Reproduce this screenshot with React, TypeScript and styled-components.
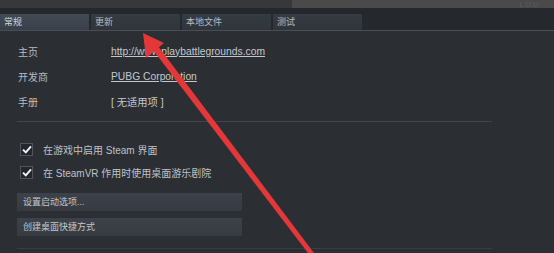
import styled, { createGlobalStyle } from 'styled-components'

const GlobalStyle = createGlobalStyle`
  html, body {
    margin: 0;
    padding: 0;
    background: #2b2e33;
    overflow: hidden;
  }
  * { box-sizing: border-box; }
`

const tabs = ['常规', '更新', '本地文件', '测试']

const info = [
  { label: '主页', value: 'http://www.playbattlegrounds.com', link: true },
  { label: '开发商', value: 'PUBG Corporation', link: true },
  { label: '手册', value: '[ 无适用项 ]', link: false },
]

const checks = ['在游戏中启用 Steam 界面', '在 SteamVR 作用时使用桌面游乐剧院']

const buttons = ['设置启动选项...', '创建桌面快捷方式']

const CheckIcon = () => (
  <svg width="10" height="9" viewBox="0 0 10 9">
    <path d="M1 4.6 L3.8 7.4 L9 1.4" fill="none" stroke="#f2f2f2" strokeWidth="2" />
  </svg>
)

const App = () => {
  return (
    <Page>
      <GlobalStyle />
      <TopBar>
        <TopLeft />
        <TopRight>
          <Ghost>LOU</Ghost>
        </TopRight>
      </TopBar>
      <Gap />
      <TabRow>
        {tabs.map((t, i) => (
          <Tab key={t} $active={i === 0}>
            {t}
          </Tab>
        ))}
      </TabRow>

      <Content>
        <InfoGrid>
          {info.map((row) => (
            <InfoRow key={row.label}>
              <Label>{row.label}</Label>
              <Value $link={row.link}>{row.value}</Value>
            </InfoRow>
          ))}
        </InfoGrid>

        <Divider />

        <CheckList>
          {checks.map((c) => (
            <CheckRow key={c}>
              <Box>
                <CheckIcon />
              </Box>
              <span>{c}</span>
            </CheckRow>
          ))}
        </CheckList>

        <ButtonList>
          {buttons.map((b) => (
            <Button key={b}>{b}</Button>
          ))}
        </ButtonList>

        <BottomLine />
      </Content>

      <Arrow width="554" height="253" viewBox="0 0 554 253">
        <polygon points="308,253 314,253 158,46 153,50" fill="#e3373a" />
        <polygon points="143,33 146,58 164,43" fill="#e3373a" />
      </Arrow>
    </Page>
  )
}

export default App

const Page = styled.div`
  position: relative;
  width: 554px;
  height: 253px;
  background: #2b2e33;
  font-family: 'Liberation Sans', 'Noto Sans CJK SC', Arial, sans-serif;
  overflow: hidden;
`

const TopBar = styled.div`
  display: flex;
  height: 8px;
`

const TopLeft = styled.div`
  width: 292px;
  background: #37383b;
`

const TopRight = styled.div`
  flex: 1;
  background: #4a4a4b;
  display: flex;
  justify-content: flex-end;
  align-items: flex-end;
  padding-right: 14px;
`

const Ghost = styled.span`
  font-size: 7px;
  line-height: 7px;
  color: #5c5d60;
  letter-spacing: 2px;
`

const Gap = styled.div`
  height: 6px;
  background: #24272b;
`

const TabRow = styled.div`
  display: flex;
  gap: 2px;
  height: 17px;
  background: #25282d;
  border-bottom: 1px solid #4a4f57;
`

const Tab = styled.div<{ $active?: boolean }>`
  width: 89px;
  padding-left: 4px;
  font-size: 9px;
  line-height: 16px;
  color: ${(p) => (p.$active ? '#d4d7db' : '#b9bdc2')};
  background: ${(p) =>
    p.$active ? 'linear-gradient(#434a54, #3a4049)' : 'linear-gradient(#353b43, #30353c)'};
`

const Content = styled.div`
  padding: 13px 0 0 17px;
  display: flex;
  flex-direction: column;
`

const InfoGrid = styled.div`
  display: flex;
  flex-direction: column;
  gap: 11px;
  padding-left: 1px;
`

const InfoRow = styled.div`
  display: flex;
  align-items: center;
  height: 14px;
`

const Label = styled.div`
  width: 93px;
  font-size: 10px;
  color: #b8bcc1;
`

const Value = styled.div<{ $link?: boolean }>`
  font-size: 10.3px;
  color: #c4c8cd;
  text-decoration: ${(p) => (p.$link ? 'underline' : 'none')};
`

const Divider = styled.div`
  margin-top: 13px;
  width: 475px;
  height: 1px;
  background: #41454c;
`

const CheckList = styled.div`
  margin-top: 20px;
  padding-left: 3px;
  display: flex;
  flex-direction: column;
  gap: 8px;
`

const CheckRow = styled.div`
  display: flex;
  align-items: center;
  gap: 10px;
  font-size: 10px;
  color: #bfc3c8;
`

const Box = styled.div`
  width: 13px;
  height: 13px;
  background: #23262a;
  border: 1px solid #50545b;
  display: flex;
  align-items: center;
  justify-content: center;
`

const ButtonList = styled.div`
  margin-top: 13px;
  display: flex;
  flex-direction: column;
  gap: 7px;
`

const Button = styled.div`
  width: 225px;
  height: 18px;
  padding-left: 6px;
  font-size: 9px;
  line-height: 18px;
  color: #c2c6cb;
  background: linear-gradient(#3d424a, #363a41);
`

const BottomLine = styled.div`
  margin-top: 12px;
  width: 475px;
  height: 1px;
  background: #3a3e44;
`

const Arrow = styled.svg`
  position: absolute;
  left: 0;
  top: 0;
  pointer-events: none;
`
